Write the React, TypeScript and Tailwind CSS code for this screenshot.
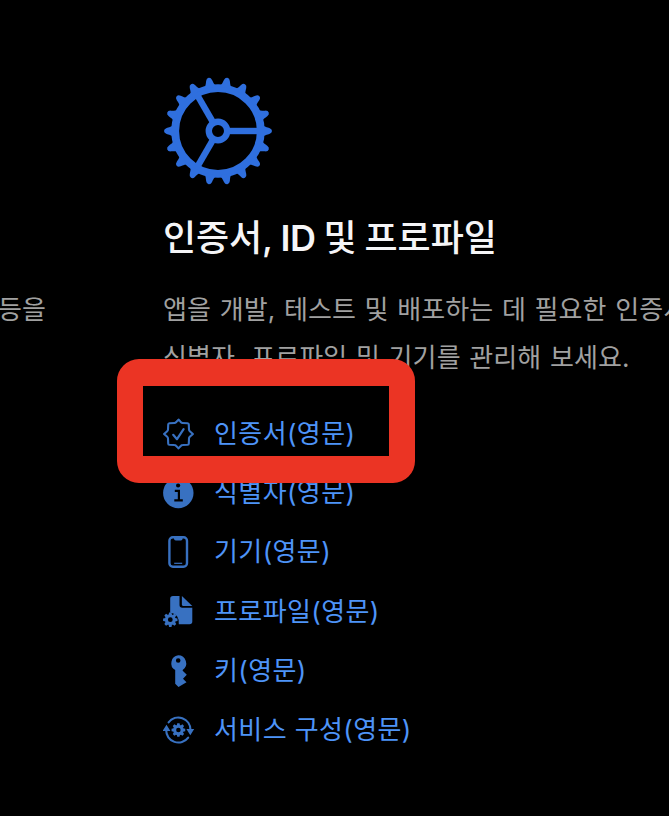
import type { ReactNode } from "react";

const TEETH = Array.from({ length: 18 }, (_, i) => i * 20);
const SMALL_TEETH = Array.from({ length: 8 }, (_, i) => i * 45);

function GearLogo() {
  return (
    <svg
      width="108"
      height="108"
      viewBox="-54 -54 108 108"
      className="block shrink-0 text-[#2f6fde]"
    >
      <circle r="42.8" fill="none" stroke="currentColor" strokeWidth="7.8" />
      <circle r="9.2" fill="none" stroke="currentColor" strokeWidth="6.4" />
      {[0, 120, 240].map((angle) => (
        <path
          key={angle}
          d="M11 0H41"
          stroke="currentColor"
          strokeWidth="6.4"
          transform={`rotate(${angle})`}
        />
      ))}
      {TEETH.map((angle) => (
        <path
          key={angle}
          d="M44 -7C46 -4.7 47 -4.2 51.3 -3Q54 -2.2 54 0Q54 2.2 51.3 3C47 4.2 46 4.7 44 7Z"
          fill="currentColor"
          transform={`rotate(${angle})`}
        />
      ))}
    </svg>
  );
}

function SmallGear({ x, y, scale }: { x: number; y: number; scale: number }) {
  return (
    <g transform={`translate(${x} ${y}) scale(${scale})`}>
      <circle r="3.9" fill="none" stroke="currentColor" strokeWidth="3" />
      {SMALL_TEETH.map((angle) => (
        <path
          key={angle}
          d="M4.5 -1.8L7.2 -1.2V1.2L4.5 1.8Z"
          fill="currentColor"
          transform={`rotate(${angle})`}
        />
      ))}
    </g>
  );
}

function Icon({ children }: { children: ReactNode }) {
  return (
    <svg
      width="32"
      height="32"
      viewBox="0 0 32 32"
      fill="none"
      className="block shrink-0 text-[#3871c1]"
    >
      {children}
    </svg>
  );
}

function SealIcon() {
  return (
    <Icon>
      <path
        d="M15.5 1.6Q17 3 18 4.3Q18.6 5 19.6 5L24.6 5.2Q25.8 5.3 25.8 6.5L26 11.5Q26 12.5 26.8 13.2L29.9 16L26.8 18.8Q26 19.5 26 20.5L25.8 25.5Q25.8 26.7 24.6 26.8L19.6 27Q18.6 27 18 27.7L15.5 30.4L13 27.7Q12.4 27 11.4 27L6.4 26.8Q5.2 26.7 5.2 25.5L5 20.5Q5 19.5 4.2 18.8L1.1 16L4.2 13.2Q5 12.5 5 11.5L5.2 6.5Q5.2 5.3 6.4 5.2L11.4 5Q12.4 5 13 4.3Z"
        stroke="currentColor"
        strokeWidth="2.1"
        strokeLinejoin="round"
      />
      <path
        d="M10.2 16.8L14 21.2L20.6 11.2"
        stroke="currentColor"
        strokeWidth="2.2"
        strokeLinecap="round"
        strokeLinejoin="round"
      />
    </Icon>
  );
}

function InfoIcon() {
  return (
    <Icon>
      <circle cx="15.3" cy="16" r="15.2" fill="currentColor" />
      <circle cx="15.1" cy="8.5" r="2.1" fill="black" />
      <path d="M11.8 13.8H15.9V22.9M11.3 23.3H19.8" stroke="black" strokeWidth="2.2" />
    </Icon>
  );
}

function PhoneIcon() {
  return (
    <Icon>
      <rect x="6.4" y="1.2" width="17.6" height="29.6" rx="3.5" stroke="currentColor" strokeWidth="2.4" />
      <path d="M11 1.5H19.6V2.5Q19.6 4.6 17.8 4.6H12.8Q11 4.6 11 2.5Z" fill="currentColor" />
      <path d="M11.2 27.3H19.2" stroke="currentColor" strokeWidth="1.2" />
    </Icon>
  );
}

function ProfileIcon() {
  return (
    <Icon>
      <path
        d="M10 0H16.5V9Q16.5 11.8 19.3 11.8H29.3V25.5Q29.3 28.3 26.5 28.3H15.8Q16.5 24.5 14.4 20.8Q12 17.2 7.2 16.7V2.8Q7.2 0 10 0Z"
        fill="currentColor"
      />
      <path d="M18.9 0L29.3 9.9H20Q18.9 9.9 18.9 8.8Z" fill="currentColor" />
      <SmallGear x={7.3} y={23.7} scale={1} />
    </Icon>
  );
}

function KeyIcon() {
  return (
    <Icon>
      <path
        fillRule="evenodd"
        d="M15.2 0.3A8 8 0 0 1 19.7 14.9V15.7L23.8 19.7L20 23.7L23.5 27.3L15.5 32L12.2 28.8V15.1A8 8 0 0 1 15.2 0.3ZM15.2 3.2A2.3 2.3 0 1 0 15.2 7.8A2.3 2.3 0 1 0 15.2 3.2Z"
        fill="currentColor"
      />
    </Icon>
  );
}

function ServiceIcon() {
  return (
    <Icon>
      <path
        d="M5.6 8.4A12.2 12.2 0 0 1 27.5 16M25.2 23.6A12.2 12.2 0 0 1 3.2 16"
        stroke="currentColor"
        strokeWidth="2.1"
        strokeLinecap="round"
      />
      <path d="M23.4 15H31.2L27.3 21.2ZM-0.4 17L3.5 10.8L7.4 17Z" fill="currentColor" />
      <SmallGear x={15.4} y={16} scale={0.95} />
    </Icon>
  );
}

const links = [
  { label: "인증서(영문)", icon: <SealIcon /> },
  { label: "식별자(영문)", icon: <InfoIcon /> },
  { label: "기기(영문)", icon: <PhoneIcon /> },
  { label: "프로파일(영문)", icon: <ProfileIcon /> },
  { label: "키(영문)", icon: <KeyIcon /> },
  { label: "서비스 구성(영문)", icon: <ServiceIcon /> },
];

export default function App() {
  return (
    <main className="relative flex h-[816px] w-[669px] overflow-hidden bg-black font-[Inter,'Noto_Sans_CJK_KR',sans-serif]">
      <div className="w-[163px] shrink-0 pt-[286px]">
        <p className="-ml-0.5 text-[26px] leading-[48px] whitespace-nowrap text-[#a1a1a1]">등을</p>
      </div>

      <section className="shrink-0 pt-[77px]">
        <div className="pl-px">
          <GearLogo />
        </div>
        <h2 className="mt-7 text-[36px] leading-[50px] font-medium tracking-[-0.1px] [word-spacing:-1.4px] whitespace-nowrap text-[#f5f5f7]">
          인증서, <span className="font-semibold tracking-[-0.6px]">ID</span> 및 프로파일
        </h2>
        <p className="mt-[23px] text-[26px] leading-[48px] tracking-[0.1px] [word-spacing:1.2px] whitespace-nowrap text-[#a1a1a1]">
          앱을 개발, 테스트 및 배포하는 데 필요한 인증서,
          <br />
          식별자, 프로파일 및 기기를 관리해 보세요.
        </p>
        <ul className="mt-[23px]">
          {links.map(({ label, icon }) => (
            <li key={label} className="h-[59.2px]">
              <a href="#" className="flex h-[58px] items-center gap-[19px] text-[#4e94f8]">
                {icon}
                <span className="text-[26px] leading-[48px] tracking-[0.4px] whitespace-nowrap">
                  {label}
                </span>
              </a>
            </li>
          ))}
        </ul>
      </section>

      <div className="pointer-events-none absolute top-[359px] left-[117px] h-[124px] w-[298px] rounded-[22px] border-x-26 border-y-27 border-[#eb3424]" />
    </main>
  );
}
